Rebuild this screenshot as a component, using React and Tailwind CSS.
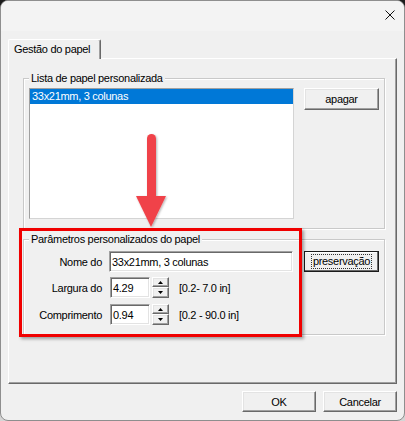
const raised =
  "bg-[#f0f0f0] border border-t-white border-l-white border-r-[#696969] border-b-[#696969] shadow-[inset_-1px_-1px_0_#a0a0a0,inset_1px_1px_0_#e3e3e3]";
const sunken =
  "bg-white border border-t-[#a0a0a0] border-l-[#a0a0a0] border-r-white border-b-white shadow-[inset_1px_1px_0_#696969,inset_-1px_-1px_0_#e3e3e3]";

function Spin() {
  return (
    <div className="ml-[2px] w-[17px] h-[21px] flex flex-col">
      <div className={`h-[10px] ${raised} flex items-center justify-center`}>
        <svg width="5" height="3" viewBox="0 0 5 3">
          <path d="M2.5 0 L5 3 L0 3 Z" fill="#000" />
        </svg>
      </div>
      <div className={`h-[11px] ${raised} flex items-center justify-center`}>
        <svg width="5" height="3" viewBox="0 0 5 3">
          <path d="M0 0 L5 0 L2.5 3 Z" fill="#000" />
        </svg>
      </div>
    </div>
  );
}

export default function App() {
  return (
    <div className="relative w-[405px] h-[421px] overflow-hidden bg-gradient-to-b from-[#1c1c1c] via-[#4a4a4a] to-[#d6d6d6] font-['Liberation_Sans',Arial,sans-serif] text-[11px] leading-[14px] tracking-[-0.3px] text-black">
      <div className="w-[405px] h-[421px] rounded-[8px] border border-[#8e8e8e] bg-[#f0f0f0] flex flex-col overflow-hidden">
        {/* title bar */}
        <div className="h-[30px] shrink-0 bg-[#f3f3f3] flex justify-end items-start pt-[9px] pr-[9px]">
          <svg width="10" height="10" viewBox="0 0 10 10">
            <path d="M0.5 0.5 L9.5 9.5 M9.5 0.5 L0.5 9.5" stroke="#111" strokeWidth="1" />
          </svg>
        </div>

        {/* body */}
        <div className="flex-1 px-[7px] pt-[8px] flex flex-col">
          <div className="flex relative z-10">
            <div className="h-[20px] -mb-px w-[93px] bg-[#f0f0f0] border-l border-t border-r border-t-white border-l-white border-r-[#696969] rounded-t-[2px] shadow-[inset_-1px_0_0_#a0a0a0] pl-[5px] pt-[2px]">
              Gestão do papel
            </div>
          </div>

          <div className="h-[326px] border border-t-white border-l-white border-r-[#696969] border-b-[#696969] shadow-[inset_-1px_-1px_0_#a0a0a0] pl-[14px] pt-[12px]">
            {/* group 1 */}
            <fieldset className="w-[360px] border border-[#c9c9c9] shadow-[inset_1px_1px_0_#fff,1px_1px_0_#fff] px-[5px] pt-[3px] pb-[9px]">
              <legend className="px-[2px] bg-[#f0f0f0]">Lista de papel personalizada</legend>
              <div className="flex items-start">
                <div className="w-[265px] h-[131px] bg-white border border-t-[#a0a0a0] border-l-[#a0a0a0] border-r-[#d4d4d4] border-b-[#d4d4d4] p-0">
                  <div className="h-[15px] bg-[#0078d7] text-white pl-[2px] leading-[15px]">
                    33x21mm, 3 colunas
                  </div>
                </div>
                <button className={`ml-[10px] w-[75px] h-[22px] ${raised} text-center`}>apagar</button>
              </div>
            </fieldset>

            {/* group 2 */}
            <fieldset className="mt-[3px] w-[360px] border border-[#c9c9c9] shadow-[inset_1px_1px_0_#fff,1px_1px_0_#fff] px-[5px] pt-[5px] pb-[9px]">
              <legend className="px-[2px] bg-[#f0f0f0]">Parâmetros personalizados do papel</legend>
              <div className="flex items-center h-[21px]">
                <div className="w-[78px] text-right -ml-[5px]">Nome do</div>
                <div className={`ml-[7px] w-[184px] h-[21px] ${sunken} pl-[2px] flex items-center`}>
                  33x21mm, 3 colunas
                </div>
                <button className="ml-[11px] w-[75px] h-[21px] border border-[#1a1a1a] bg-[#f0f0f0] shadow-[inset_-1px_-1px_0_#696969,inset_1px_1px_0_#fff] flex items-center justify-center">
                  <span className="px-[1px] outline outline-1 outline-dotted outline-[#333] leading-[13px]">
                    preservação
                  </span>
                </button>
              </div>
              <div className="flex items-center h-[21px] mt-[5px]">
                <div className="w-[78px] text-right -ml-[5px]">Largura do</div>
                <div className={`ml-[8px] w-[40px] h-[21px] ${sunken} pl-[2px] flex items-center`}>4.29</div>
                <Spin />
                <div className="ml-[10px]">[0.2- 7.0 in]</div>
              </div>
              <div className="flex items-center h-[21px] mt-[6px]">
                <div className="w-[78px] text-right -ml-[5px]">Comprimento</div>
                <div className={`ml-[8px] w-[40px] h-[21px] ${sunken} pl-[2px] flex items-center`}>0.94</div>
                <Spin />
                <div className="ml-[10px]">[0.2 - 90.0 in]</div>
              </div>
            </fieldset>
          </div>

          <div className="flex justify-end gap-[7px] mt-[7px]">
            <button className={`w-[74px] h-[21px] ${raised}`}>OK</button>
            <button className={`w-[74px] h-[21px] ${raised}`}>Cancelar</button>
          </div>
        </div>
      </div>

      {/* annotation: red box */}
      <div className="absolute left-[19px] top-[228px] w-[283px] h-[109px] border-[3px] border-[#f00000] shadow-[2px_2px_3px_rgba(0,0,0,0.35)]" />

      {/* annotation: arrow */}
      <svg className="absolute left-[130px] top-[128px]" width="44" height="104" viewBox="130 128 44 104">
        <defs>
          <filter id="sh" x="-20%" y="-10%" width="150%" height="130%">
            <feDropShadow dx="1" dy="1" stdDeviation="1" floodColor="#000" floodOpacity="0.3" />
          </filter>
        </defs>
        <g filter="url(#sh)" fill="#f0434a">
          <line x1="151.5" y1="138.5" x2="151.5" y2="200" stroke="#f0434a" strokeWidth="9" strokeLinecap="round" />
          <path d="M136 196 L166 196 L151 227 Z" />
        </g>
      </svg>
    </div>
  );
}
